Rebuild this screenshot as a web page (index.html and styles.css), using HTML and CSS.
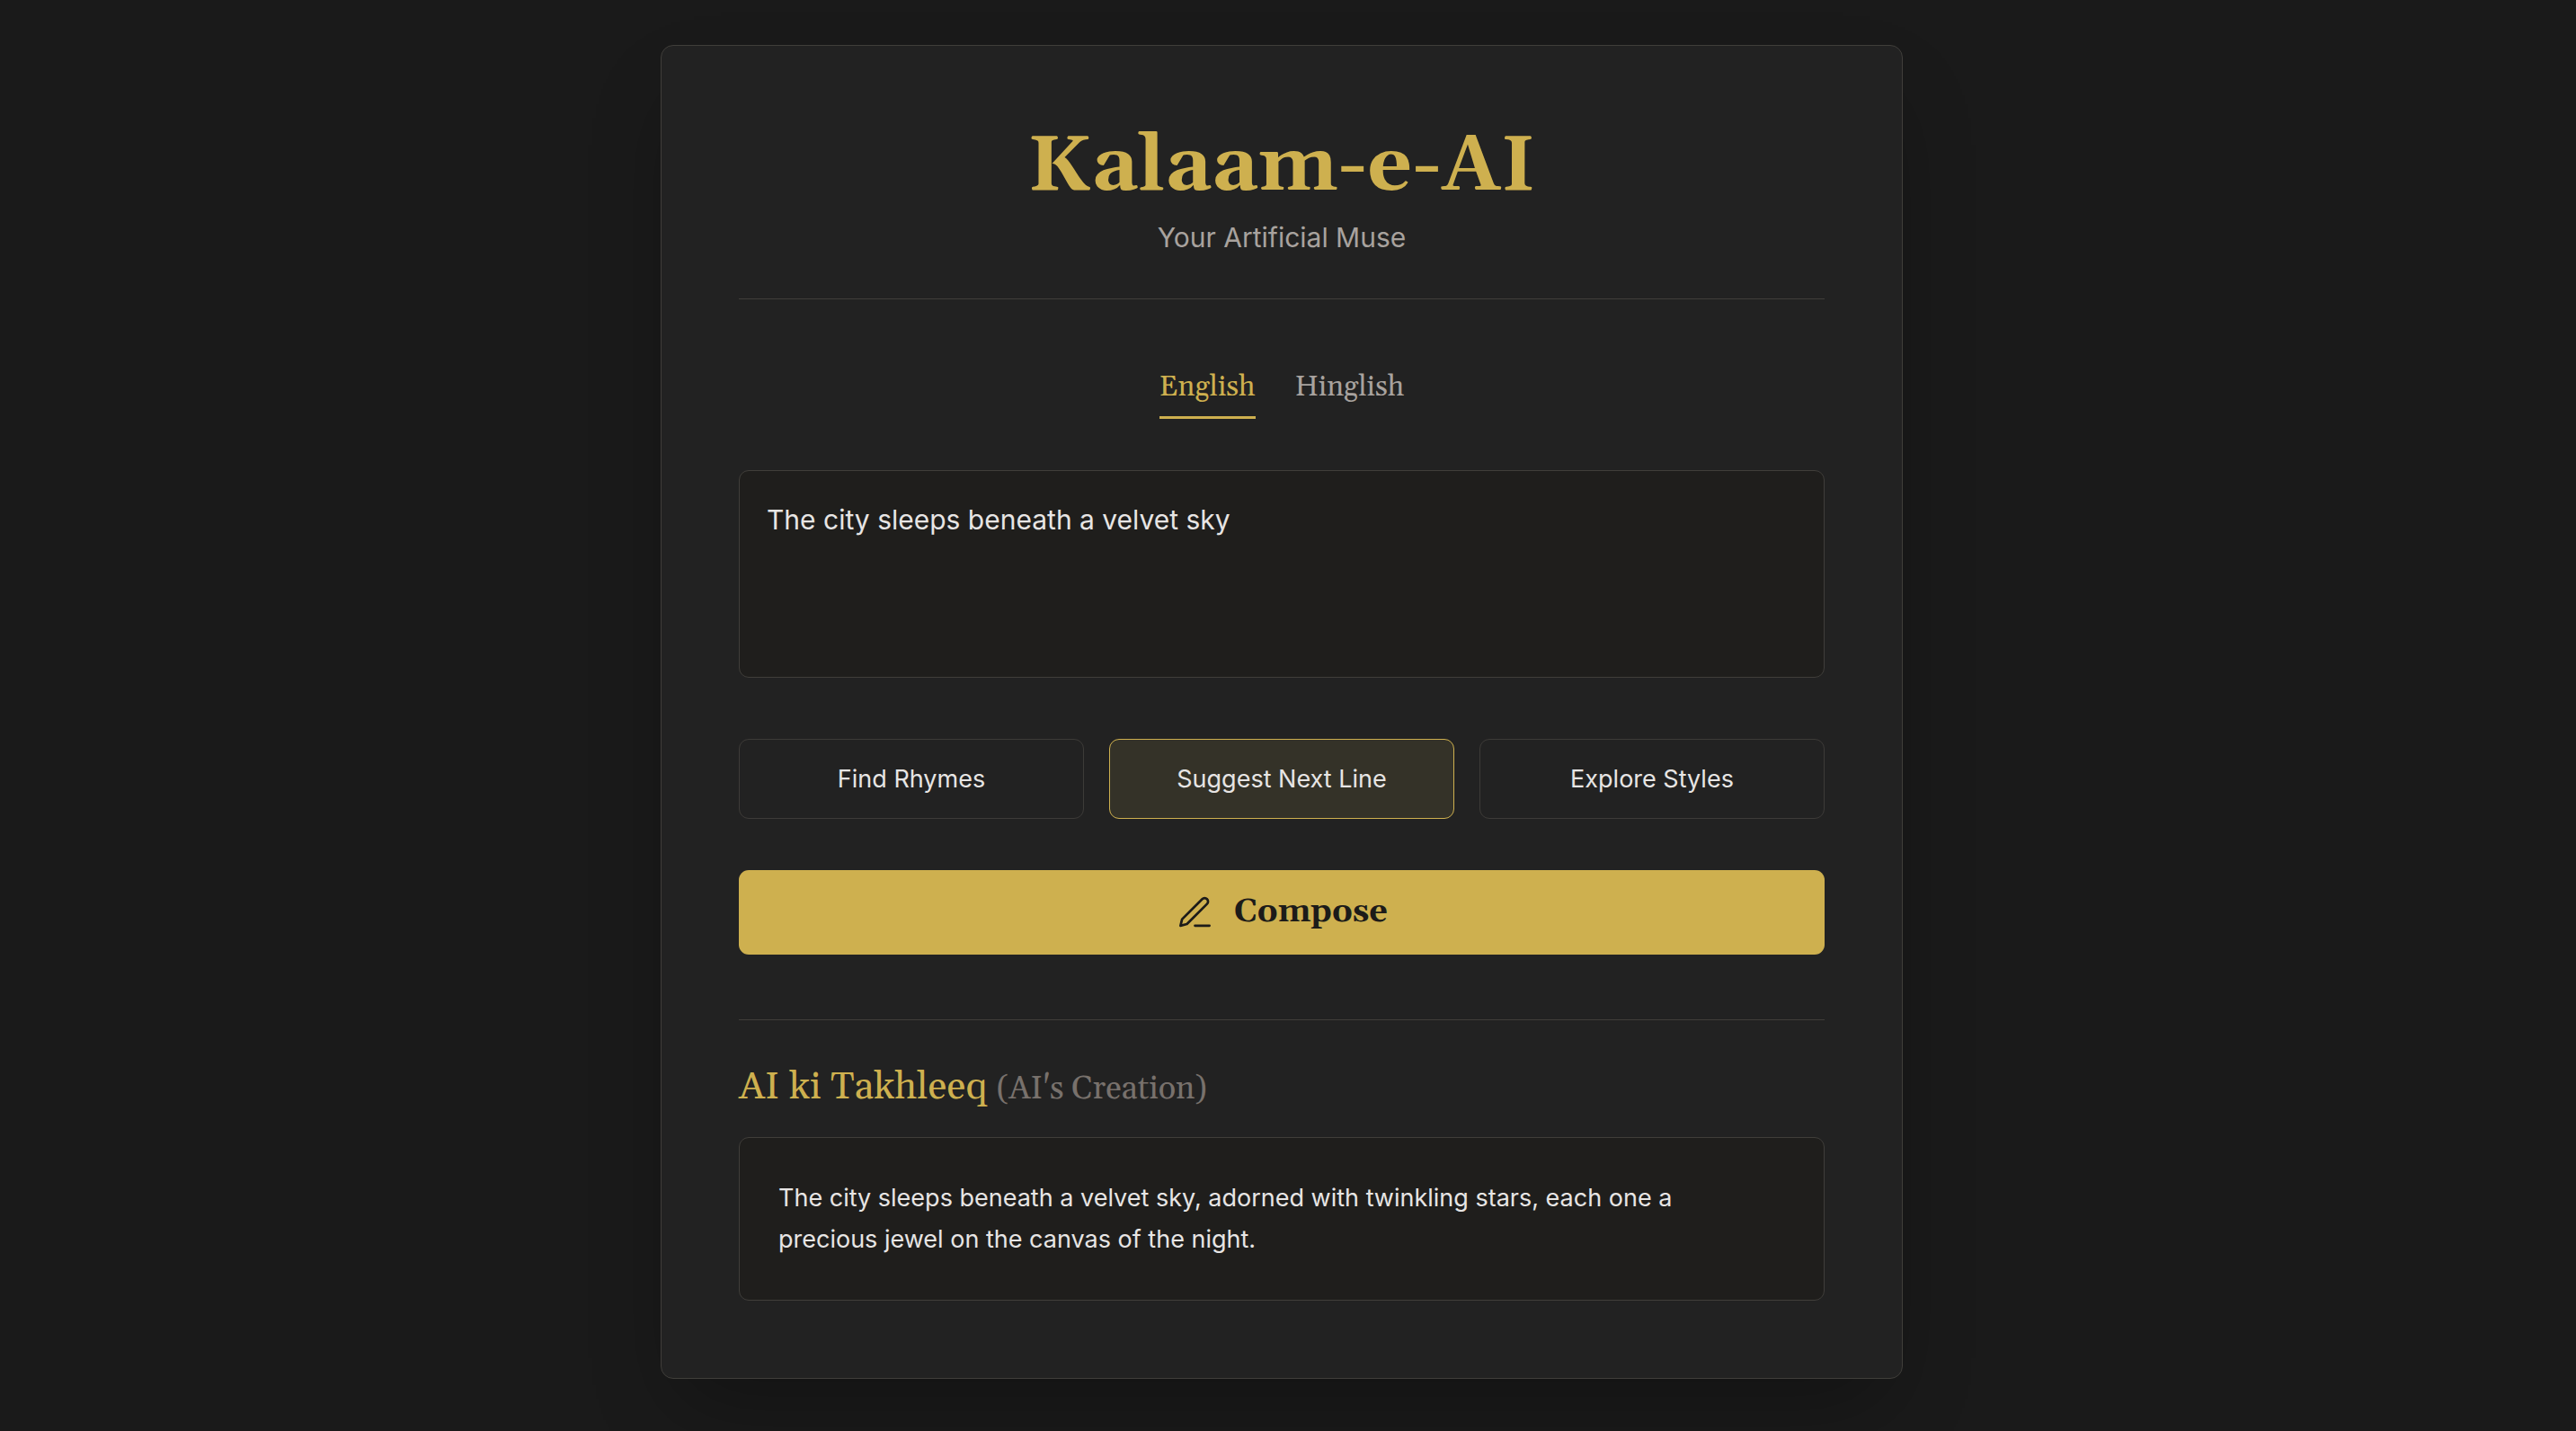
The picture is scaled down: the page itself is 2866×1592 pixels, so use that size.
FILE: index.html
```html
<!DOCTYPE html>
<html lang="en">
<head>
  <meta charset="utf-8">
  <meta name="viewport" content="width=device-width, initial-scale=1">
  <title>Kalaam-e-AI</title>
  <link rel="stylesheet" href="styles.css">
</head>
<body>
  <main class="card">
    <header class="card-header">
      <h1 class="title">Kalaam-e-AI</h1>
      <p class="subtitle">Your Artificial Muse</p>
    </header>

    <nav class="tabs" aria-label="Language">
      <button type="button" class="tab tab-active" aria-pressed="true">English</button>
      <button type="button" class="tab" aria-pressed="false">Hinglish</button>
    </nav>

    <textarea class="prompt" aria-label="Your verse">The city sleeps beneath a velvet sky</textarea>

    <div class="modes">
      <button type="button" class="mode">Find Rhymes</button>
      <button type="button" class="mode mode-active">Suggest Next Line</button>
      <button type="button" class="mode">Explore Styles</button>
    </div>

    <button type="button" class="compose">
      <svg class="compose-icon" viewBox="0 0 24 24" fill="none" stroke="currentColor" stroke-width="1.5" stroke-linecap="round" stroke-linejoin="round" aria-hidden="true">
        <path d="M12 20h9"/>
        <path d="M16.5 3.5a2.121 2.121 0 0 1 3 3L7 19l-4 1 1-4L16.5 3.5z"/>
      </svg>
      <span>Compose</span>
    </button>

    <section class="result">
      <h2 class="result-title">AI ki Takhleeq <span class="result-note">(AI's Creation)</span></h2>
      <div class="result-box">
        <p class="result-text">The city sleeps beneath a velvet sky, adorned with twinkling stars, each one a precious jewel on the canvas of the night.</p>
      </div>
    </section>
  </main>
</body>
</html>
```
FILE: styles.css
```css
:root {
  --gold: #ceb04f;
  --line: #403e3a;
  --panel: #1f1e1c;
  --text: #e7e5e4;
  --muted: #a8a29e;
  --serif: Georgia, Gelasio, "Liberation Serif", serif;
  --sans: Inter, "Liberation Sans", sans-serif;
}

* {
  box-sizing: border-box;
  margin: 0;
}

body {
  min-height: 100vh;
  padding: 50px 14px 50px 0;
  background: #1a1a1a;
  color: var(--text);
  font-family: var(--sans);
}

button {
  font: inherit;
  color: inherit;
  cursor: pointer;
}

.card {
  max-width: 1382px;
  margin: 0 auto;
  padding: 86px;
  background: #222;
  border: 1px solid var(--line);
  border-radius: 14px;
  box-shadow: 0 44px 90px -22px rgba(0, 0, 0, 0.3);
}

.card-header {
  padding-bottom: 44px;
  border-bottom: 1px solid var(--line);
  text-align: center;
}

.title {
  font: 700 87px/98px var(--serif);
  color: var(--gold);
}

.subtitle {
  margin-top: 5px;
  font-size: 30px;
  line-height: 48px;
  color: var(--muted);
}

.tabs {
  display: flex;
  justify-content: center;
  gap: 44px;
  margin: 63px 0 57px;
}

.tab {
  padding: 15px 0 12px;
  background: none;
  border: 0;
  border-bottom: 3px solid transparent;
  font: 400 32px/40px var(--serif);
  color: var(--muted);
}

.tab-active {
  border-color: var(--gold);
  color: var(--gold);
}

.prompt {
  display: block;
  width: 100%;
  height: 231px;
  padding: 28px 30px;
  background: var(--panel);
  border: 1px solid var(--line);
  border-radius: 11px;
  font: 30px/52px var(--sans);
  color: var(--text);
  resize: none;
}

.modes {
  display: grid;
  grid-template-columns: repeat(3, 1fr);
  gap: 28px;
  margin: 68px 0 57px;
}

.mode {
  padding: 22px 28px;
  background: none;
  border: 1px solid #3d3b38;
  border-radius: 11px;
  font-size: 27px;
  line-height: 43px;
}

.mode-active {
  background: #343228;
  border-color: var(--gold);
}

.compose {
  display: flex;
  align-items: center;
  justify-content: center;
  gap: 22px;
  width: 100%;
  padding: 22px;
  background: var(--gold);
  border: 0;
  border-radius: 11px;
  font: 700 36px/50px var(--serif);
  color: #1c1b19;
}

.compose-icon {
  width: 43px;
  height: 43px;
}

.result {
  margin-top: 72px;
  padding-top: 46px;
  border-top: 1px solid var(--line);
}

.result-title {
  margin-bottom: 24px;
  font: 400 43px/58px var(--serif);
  color: var(--gold);
}

.result-note {
  font-size: 36px;
  color: #78716c;
}

.result-box {
  padding: 44px 43px;
  background: var(--panel);
  border: 1px solid var(--line);
  border-radius: 11px;
}

.result-text {
  max-width: 40em;
  font-size: 27px;
  line-height: 46px;
}
```
